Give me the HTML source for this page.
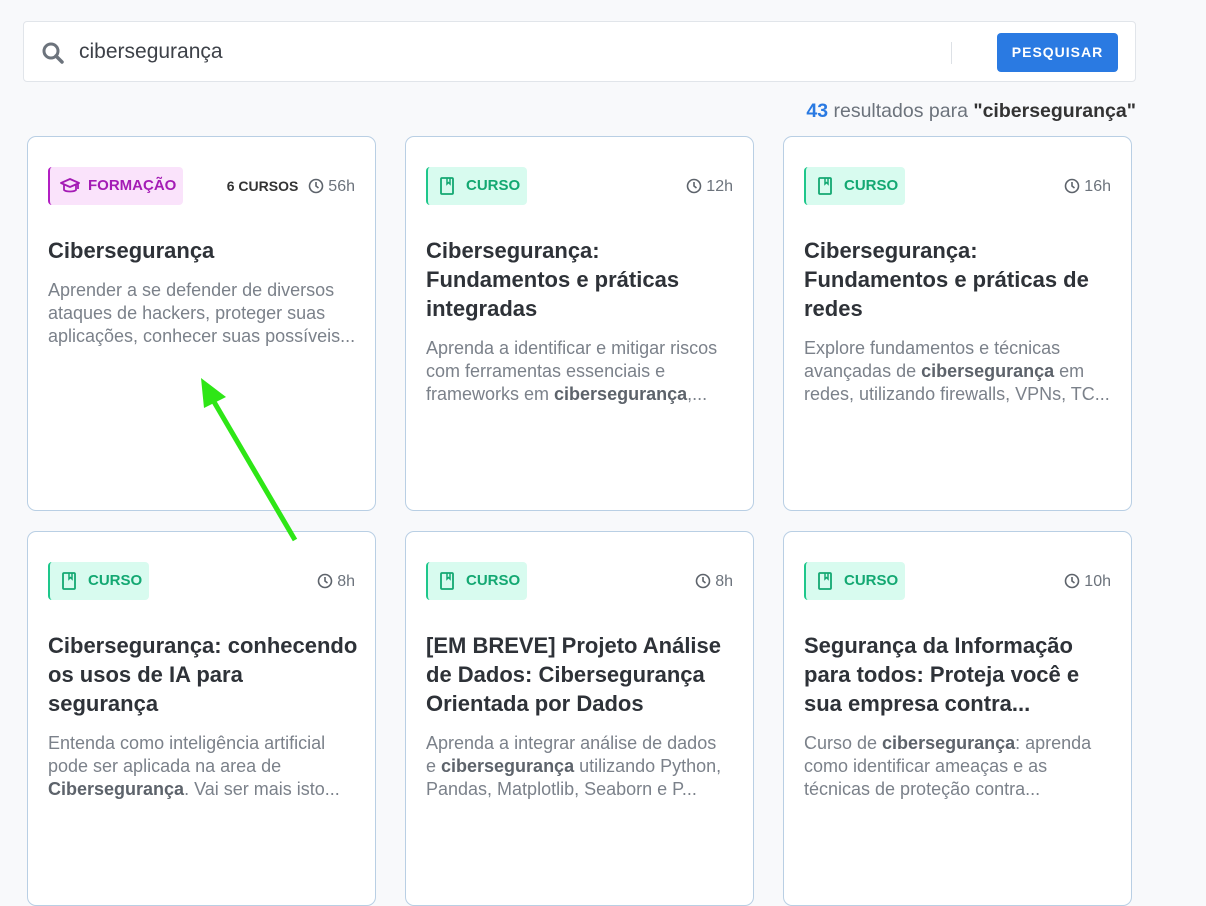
<!DOCTYPE html><html><head><meta charset="utf-8"><style>
body{margin:0;width:1206px;height:786px;overflow:hidden;background:#f8f9fb;font-family:"Liberation Sans",sans-serif;position:relative}
.search{position:absolute;left:23px;top:21px;width:1113px;height:61px;background:#fff;border:1px solid #e1e5ea;border-radius:4px;box-sizing:border-box}
.search .q{position:absolute;left:55px;top:18px;font-size:21px;color:#3d4148}
.sep{position:absolute;left:927px;top:20px;width:1px;height:22px;background:#dde1e6}
.btn{position:absolute;left:973px;top:11px;width:121px;height:39px;background:#2a7ae2;border-radius:4px;color:#fff;font-weight:bold;font-size:14px;letter-spacing:1px;text-align:center;line-height:39px}
.res{position:absolute;right:70px;top:100px;font-size:19.5px;color:#6c737c}
.res b.n{color:#2a7ae2}.res b.t{color:#333}
.card{position:absolute;width:349px;height:375px;background:#fff;border:1px solid #b9cfe4;border-radius:9px;box-sizing:border-box}
.badge{position:absolute;left:20px;top:30px;height:38px;border-radius:4px;border-left:2px solid;box-sizing:border-box;font-size:15px;font-weight:bold;line-height:38px;padding-left:38px;padding-right:7px}
.badge svg{position:absolute;left:10px;top:10px}
.c{background:#d8fbef;border-color:#1ec78b;color:#13a872}
.f{background:#fae3fb;border-color:#b21fc3;color:#a41bb5}
.meta{position:absolute;right:20px;top:41px;font-size:16px;color:#6c737c}
.meta svg{vertical-align:-3px;margin-right:4px}
.title{position:absolute;left:20px;top:99px;width:320px;font-size:22px;font-weight:bold;line-height:29px;color:#2e3238}
.desc{font-size:18px;line-height:23px;color:#7b818a;margin-top:14px;font-weight:normal;width:312px}
.desc b{color:#5d636b}
</style></head><body>
<div class="search">
<svg style="position:absolute;left:17px;top:19px" width="24" height="24" viewBox="0 0 24 24"><circle cx="10" cy="10" r="7" fill="none" stroke="#6c737c" stroke-width="3"/><path d="M15 15l6 6" stroke="#6c737c" stroke-width="3.5" stroke-linecap="round"/></svg>
<div class="q">cibersegurança</div><div class="sep"></div><div class="btn">PESQUISAR</div></div>
<div class="res"><b class="n">43</b> resultados para <b class="t">"cibersegurança"</b></div>

<svg width="0" height="0" style="position:absolute"><defs>
<symbol id="bk" viewBox="0 0 18 18"><rect x="3" y="1" width="12" height="16" rx="1" fill="none" stroke="currentColor" stroke-width="1.8"/><path d="M9 1v6l1.5-1.5L12 7V1" fill="none" stroke="currentColor" stroke-width="1.5"/></symbol>
<symbol id="ck" viewBox="0 0 16 16"><circle cx="8" cy="8" r="6.5" fill="none" stroke="#5d636b" stroke-width="1.6"/><path d="M8 4v4l2.5 2" fill="none" stroke="#5d636b" stroke-width="1.6"/></symbol>
</defs></svg>

<div class="card" style="left:27px;top:136px"><div class="badge f"><svg width="20" height="18" viewBox="0 0 20 18"><path d="M10 2L1 6l9 4 9-4z M4 8v5c2 2 10 2 12 0V8 M18 7v5" fill="none" stroke="#a41bb5" stroke-width="1.8" stroke-linejoin="round"/></svg>FORMAÇÃO</div>
<div class="meta"><b style="color:#333;font-size:14px;margin-right:10px">6 CURSOS</b><svg width="16" height="16"><use href="#ck"/></svg>56h</div>
<div class="title">Cibersegurança<div class="desc">Aprender a se defender de diversos ataques de hackers, proteger suas aplicações, conhecer suas possíveis...</div></div></div>

<div class="card" style="left:405px;top:136px"><div class="badge c"><svg width="18" height="18" style="color:#13a872"><use href="#bk"/></svg>CURSO</div>
<div class="meta"><svg width="16" height="16"><use href="#ck"/></svg>12h</div>
<div class="title">Cibersegurança:<br>Fundamentos e práticas<br>integradas<div class="desc">Aprenda a identificar e mitigar riscos<br>com ferramentas essenciais e<br>frameworks em <b>cibersegurança</b>,...</div></div></div>

<div class="card" style="left:783px;top:136px"><div class="badge c"><svg width="18" height="18" style="color:#13a872"><use href="#bk"/></svg>CURSO</div>
<div class="meta"><svg width="16" height="16"><use href="#ck"/></svg>16h</div>
<div class="title">Cibersegurança:<br>Fundamentos e práticas de<br>redes<div class="desc">Explore fundamentos e técnicas<br>avançadas de <b>cibersegurança</b> em<br>redes, utilizando firewalls, VPNs, TC...</div></div></div>

<div class="card" style="left:27px;top:531px"><div class="badge c"><svg width="18" height="18" style="color:#13a872"><use href="#bk"/></svg>CURSO</div>
<div class="meta"><svg width="16" height="16"><use href="#ck"/></svg>8h</div>
<div class="title">Cibersegurança: conhecendo<br>os usos de IA para<br>segurança<div class="desc">Entenda como inteligência artificial<br>pode ser aplicada na area de<br><b>Cibersegurança</b>. Vai ser mais isto...</div></div></div>

<div class="card" style="left:405px;top:531px"><div class="badge c"><svg width="18" height="18" style="color:#13a872"><use href="#bk"/></svg>CURSO</div>
<div class="meta"><svg width="16" height="16"><use href="#ck"/></svg>8h</div>
<div class="title">[EM BREVE] Projeto Análise<br>de Dados: Cibersegurança<br>Orientada por Dados<div class="desc">Aprenda a integrar análise de dados<br>e <b>cibersegurança</b> utilizando Python,<br>Pandas, Matplotlib, Seaborn e P...</div></div></div>

<div class="card" style="left:783px;top:531px"><div class="badge c"><svg width="18" height="18" style="color:#13a872"><use href="#bk"/></svg>CURSO</div>
<div class="meta"><svg width="16" height="16"><use href="#ck"/></svg>10h</div>
<div class="title">Segurança da Informação<br>para todos: Proteja você e<br>sua empresa contra...<div class="desc">Curso de <b>cibersegurança</b>: aprenda<br>como identificar ameaças e as<br>técnicas de proteção contra...</div></div></div>

<svg style="position:absolute;left:0;top:0" width="1206" height="786"><path d="M295 540L210 395" stroke="#2ee616" stroke-width="5"/><path d="M201 378L226 397 204 408z" fill="#2ee616"/></svg>
</body></html>
